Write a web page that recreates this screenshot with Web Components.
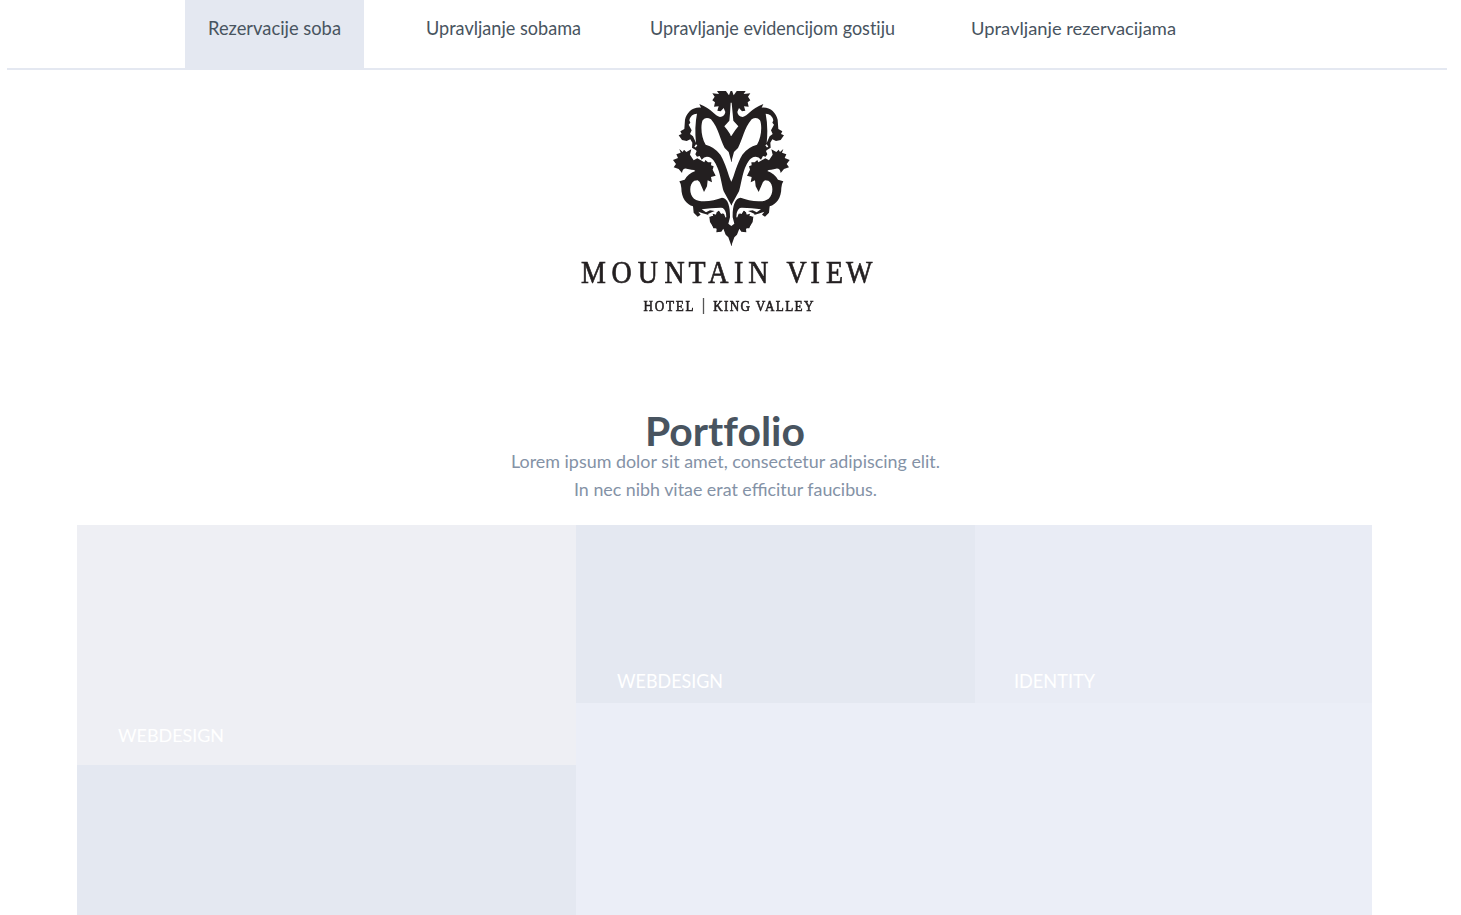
<!DOCTYPE html>
<html lang="hr"><head><meta charset="utf-8"><title>Mountain View</title>
<style>html,body{margin:0;background:#fff;overflow:hidden;height:915px}body{font-family:Lato,sans-serif;color:#485460}</style></head>
<body><hotel-page></hotel-page>
<script>
const define=(name,html,setup)=>customElements.define(name,class extends HTMLElement{
  constructor(){super();this.attachShadow({mode:'open'}).innerHTML=html}
  connectedCallback(){if(setup)setup(this,this.shadowRoot)}
});
// A single line of text fitted to an exact width.
define('fit-text',`<style>:host{display:block;font-variant-ligatures:none}:host([lig]){font-variant-ligatures:normal}svg{display:block;overflow:visible}text{fill:currentColor}</style><svg><text x="0"></text></svg>`,(el,r)=>{
  const w=el.getAttribute('w'),s=+el.getAttribute('size'),svg=r.querySelector('svg'),t=r.querySelector('text');
  svg.setAttribute('width',w);svg.setAttribute('height',18);
  t.setAttribute('y',15);t.setAttribute('font-size',s);t.setAttribute('textLength',w);t.setAttribute('lengthAdjust','spacingAndGlyphs');
  t.textContent=el.getAttribute('text');
});
define('nav-item',`<style>:host{display:block;box-sizing:border-box;height:68px;padding:20px 23px 0}:host([active]){background:#e4e8f1}</style><slot></slot>`);
define('nav-bar',`<style>:host{display:flex;box-sizing:border-box;height:70px;margin:0 14px 0 7px;padding-left:178px;border-bottom:2px solid #e4e8f1}</style><slot></slot>`);
define('hotel-logo',`<style>:host{display:block;height:226px;width:300px;margin:20px 0 0 577px}svg{display:block}.mark{filter:blur(.35px)}text{font-family:"Liberation Serif",serif;fill:#231f20;stroke:#231f20}</style>
<svg class="mark" width="300" height="226" viewBox="577 90 300 226"><defs><g id="half">
<path fill="#231f20" d="M215 33H171L177 42 157 40 164 50 157 61 165 67 162 80 176 79 172 92 182 94 191 84 196 96Q194 109 180 111C164 108 157 87 118 72L123 83C98 80 80 98 75 119L73 147 61 154 65 162 56 166 66 180 80 183 91 178 97 188 96 203 107 210 112 205 103 200 108 193 112 196 104 207 110 213 106 223 111 230 119 228 125 239 Q134 227 147 231C160 236 168 250 176 272C182 290 186 318 191 334L214 376H215V305H214C204 284 198 252 181 224Q164 201 137 194C124 174 121 137 128 121Q138 108 153 118C176 145 180 178 194 204L206 216 214 245H215Z"/>
<path fill="#fff" d="M111 101Q92 102 88 121L91 128 86 134 95 151 90 162 99 169 108 189Q103 140 111 101ZM216 68H213L211 90 208 122 193 139 202 150 214 168H216Z"/>
<path fill="#fff" d="M197 32H212L207 46Z"/><path fill="#231f20" d="M58 207L62 218 49 223 54 234 39 240 48 252 41 262 56 267 66 279 Q68 264 80 266L94 269Q104 269 106 273 84 281 74 299L58 304Q64 313 64 324C64 354 79 373 99 379L101 398 113 410 122 404 115 395 128 400 146 405 148 410 150 426 158 439 170 446 169 457 184 455 190 446 197 464 205 472 214 497H215V438H214L205 431 210 412C211 382 204 353 186 353C163 362 122 371 102 356C87 343 87 311 103 302L113 301 119 306 132 336 141 319 143 301 156 307 153 291 167 287 158 269 161 259 153 256 154 247 144 247 136 240 133 247 112 235 101 241 90 224 94 208 79 216 72 209 68 216Z"/>
<path fill="#fff" d="M125 388L153 385 182 383Q194 382 198 400L199 411 193 419 187 409 190 400 183 402 177 392 170 397 166 411 157 407 148 410 144 402 155 397 164 393 150 391 138 397Z"/><path fill="#fff" d="M163 402 158 407 148 411 146 405Z"/>
<path fill="#231f20" d="M149 410 160 410 158 401 169 404 175 392 184 404 192 401 196 412 203 416 201 445H160Z"/>
</g></defs>
<g transform="translate(660 80) scale(.33333)"><svg x="0" y="33" width="430" height="470" viewBox="0 33 430 470"><use href="#half"/><use href="#half" transform="translate(428 0) scale(-1 1)"/></svg></g>
<g transform="translate(581 282.8) scale(.86 1)"><text font-size="32.5" stroke-width=".7" x="0 35.5 66 97 125 148 178 194.5">MOUNTAIN</text>
<text font-size="32.5" stroke-width=".7" x="239 267 285 308">VIEW</text></g>
<g transform="translate(643.5 310.5) scale(.85 1)"><text font-size="15.5" stroke-width=".6" textLength="59">HOTEL</text>
<text x="82" font-size="15.5" stroke-width=".6" textLength="118">KING VALLEY</text></g>
<path d="M703.5 298V314" stroke="#555" stroke-width="1.3"/>
</svg>`);
define('page-intro',`<style>:host{display:flex;flex-direction:column;align-items:center;width:1450px;height:209px;box-sizing:border-box;padding-top:115px;color:#8492a6}
.h{color:#485460;font-weight:700;margin-bottom:4px}.a{margin-bottom:10px}</style>
<fit-text class="h" w="160" size="39.5" text="Portfolio"></fit-text><fit-text lig class="a" w="429" size="18" text="Lorem ipsum dolor sit amet, consectetur adipiscing elit."></fit-text><fit-text lig w="303" size="18" text="In nec nibh vitae erat efficitur faucibus."></fit-text>`);
define('portfolio-tile',`<style>:host{display:flex;box-sizing:border-box;align-items:flex-end;padding:0 0 12px 41px;color:#fff}</style><slot></slot>`);
define('portfolio-grid',`<style>:host{display:grid;grid-template-columns:499px 796px;width:1295px;height:390px;margin-left:77px}
.l{display:grid;grid-template-rows:240px 150px}.r{display:grid;grid-template-columns:399px 397px;grid-template-rows:178px 212px}
.one{background:#eeeff4;padding-bottom:20px}.two,.four{background:#e4e8f1}.three{background:#e9ecf5;padding-left:39px}.five{background:#ebeef7;grid-column:1/-1}</style>
<div class="l"><portfolio-tile class="one"><fit-text w="106" size="18" text="WEBDESIGN"></fit-text></portfolio-tile><portfolio-tile class="four"></portfolio-tile></div>
<div class="r"><portfolio-tile class="two"><fit-text w="106" size="19" text="WEBDESIGN"></fit-text></portfolio-tile><portfolio-tile class="three"><fit-text w="81" size="19" text="IDENTITY"></fit-text></portfolio-tile><portfolio-tile class="five"></portfolio-tile></div>`);
define('hotel-page',`<style>:host{display:block;height:915px;overflow:hidden}.n2{margin-left:39px}.n3{margin-left:23px}.n4{margin-left:30px}</style>
<nav-bar><nav-item active><fit-text w="133" size="19.2" text="Rezervacije soba"></fit-text></nav-item><nav-item class="n2"><fit-text w="155" size="19.2" text="Upravljanje sobama"></fit-text></nav-item><nav-item class="n3"><fit-text w="245" size="19.2" text="Upravljanje evidencijom gostiju"></fit-text></nav-item><nav-item class="n4"><fit-text w="205" size="18" text="Upravljanje rezervacijama"></fit-text></nav-item></nav-bar>
<hotel-logo></hotel-logo><page-intro></page-intro><portfolio-grid></portfolio-grid>`);
</script></body></html>
